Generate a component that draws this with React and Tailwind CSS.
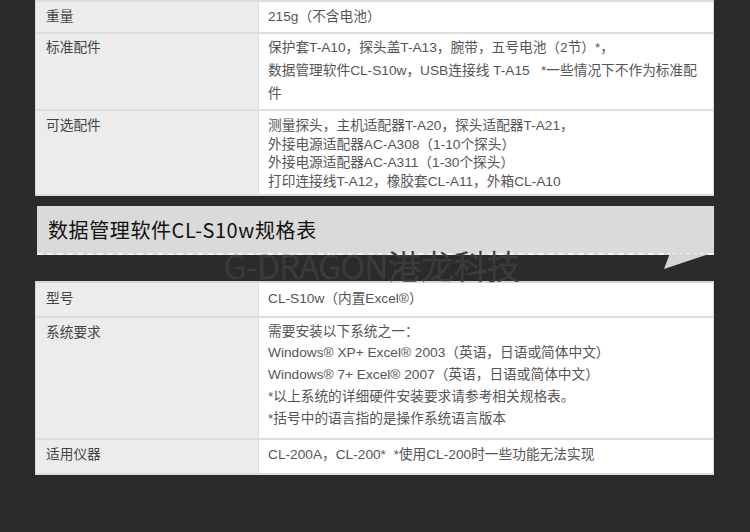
const font = { fontFamily: '"Liberation Sans", "Noto Sans CJK SC", sans-serif' }

function Row({ label, pad, children }) {
  return (
    <div className={`grid grid-cols-[223px_1fr] border-b-2 border-[#dedede]`}>
      <div className={`bg-[#ececec] border-r border-[#dcdcdc] pl-[10px] text-[#444] ${pad}`}>{label}</div>
      <div className={`bg-white pl-[9px] pr-1 text-[#555] whitespace-nowrap ${pad}`}>{children}</div>
    </div>
  )
}

export default function App() {
  return (
    <div className="relative w-[750px] h-[532px] overflow-hidden bg-[#2b2b2b] text-[13.7px]" style={font}>
      <div className="ml-[35px] w-[679px]">
        {/* spec table, tail of the previous section */}
        <div className="border-x border-[#d6d6d6]">
          <div className="grid grid-cols-[223px_1fr] h-[2px] border-b-2 border-[#dedede]">
            <div className="bg-[#ececec] border-r border-[#dcdcdc]" />
            <div className="bg-white" />
          </div>
          <Row label="重量" pad="pt-[4px] pb-[4px] leading-[22px]">215g（不含电池）</Row>
          <Row label="标准配件" pad="pt-[2px] pb-[4px] leading-[23px]">
            <div>保护套T-A10，探头盖T-A13，腕带，五号电池（2节）*，</div>
            <div>数据管理软件CL-S10w，USB连接线 T-A15&nbsp;&nbsp; *一些情况下不作为标准配</div>
            <div>件</div>
          </Row>
          <Row label="可选配件" pad="pt-[6px] pb-[3px] leading-[18.5px]">
            <div>测量探头，主机适配器T-A20，探头适配器T-A21，</div>
            <div>外接电源适配器AC-A308（1-10个探头）</div>
            <div>外接电源适配器AC-A311（1-30个探头）</div>
            <div>打印连接线T-A12，橡胶套CL-A11，外箱CL-A10</div>
          </Row>
        </div>

        {/* section banner */}
        <div className="relative mt-[10px] ml-[2px] w-[677px] h-[49px] bg-[#dadada] border-b-2 border-dashed border-[#f2f2f2] flex items-center pl-[11px]">
          <span className="text-[20px] text-[#111] tracking-[0.6px]" style={{ fontFamily: '"Noto Sans CJK SC", "Liberation Sans", sans-serif' }}>
            数据管理软件CL-S10w规格表
          </span>
          <svg className="absolute right-0 top-[47px]" width="50" height="18" viewBox="0 0 50 18">
            <polygon points="6,0 48,0 0,16" fill="#d6d6d6" />
            <line x1="8" y1="0.5" x2="48" y2="0.5" stroke="#f2f2f2" strokeDasharray="4 3" />
          </svg>
        </div>

        {/* CL-S10w spec table */}
        <div className="mt-[26px] border-x border-t-2 border-[#d6d6d6]">
          <Row label="型号" pad="pt-[5px] pb-[6px] leading-[22px]">CL-S10w（内置Excel®）</Row>
          <Row label="系统要求" pad="pt-[4px] pb-[8px] leading-[22px]">
            <div className="leading-[20px]">需要安装以下系统之一：</div>
            <div>Windows® XP+ Excel® 2003（英语，日语或简体中文）</div>
            <div>Windows® 7+ Excel® 2007（英语，日语或简体中文）</div>
            <div>*以上系统的详细硬件安装要求请参考相关规格表。</div>
            <div>*括号中的语言指的是操作系统语言版本</div>
          </Row>
          <Row label="适用仪器" pad="pt-[4px] pb-[7px] leading-[22px]">CL-200A，CL-200*&nbsp; *使用CL-200时一些功能无法实现</Row>
        </div>
      </div>

      {/* watermark */}
      <div
        className="absolute left-[224px] top-[245px] text-[33px] leading-[40px] text-[#363636] font-light whitespace-nowrap"
        style={{ fontFamily: '"Noto Sans CJK SC", "Liberation Sans", sans-serif', WebkitTextStroke: '0.6px #454545' }}
      >
        G-DRAGON港龙科技
      </div>
    </div>
  )
}
